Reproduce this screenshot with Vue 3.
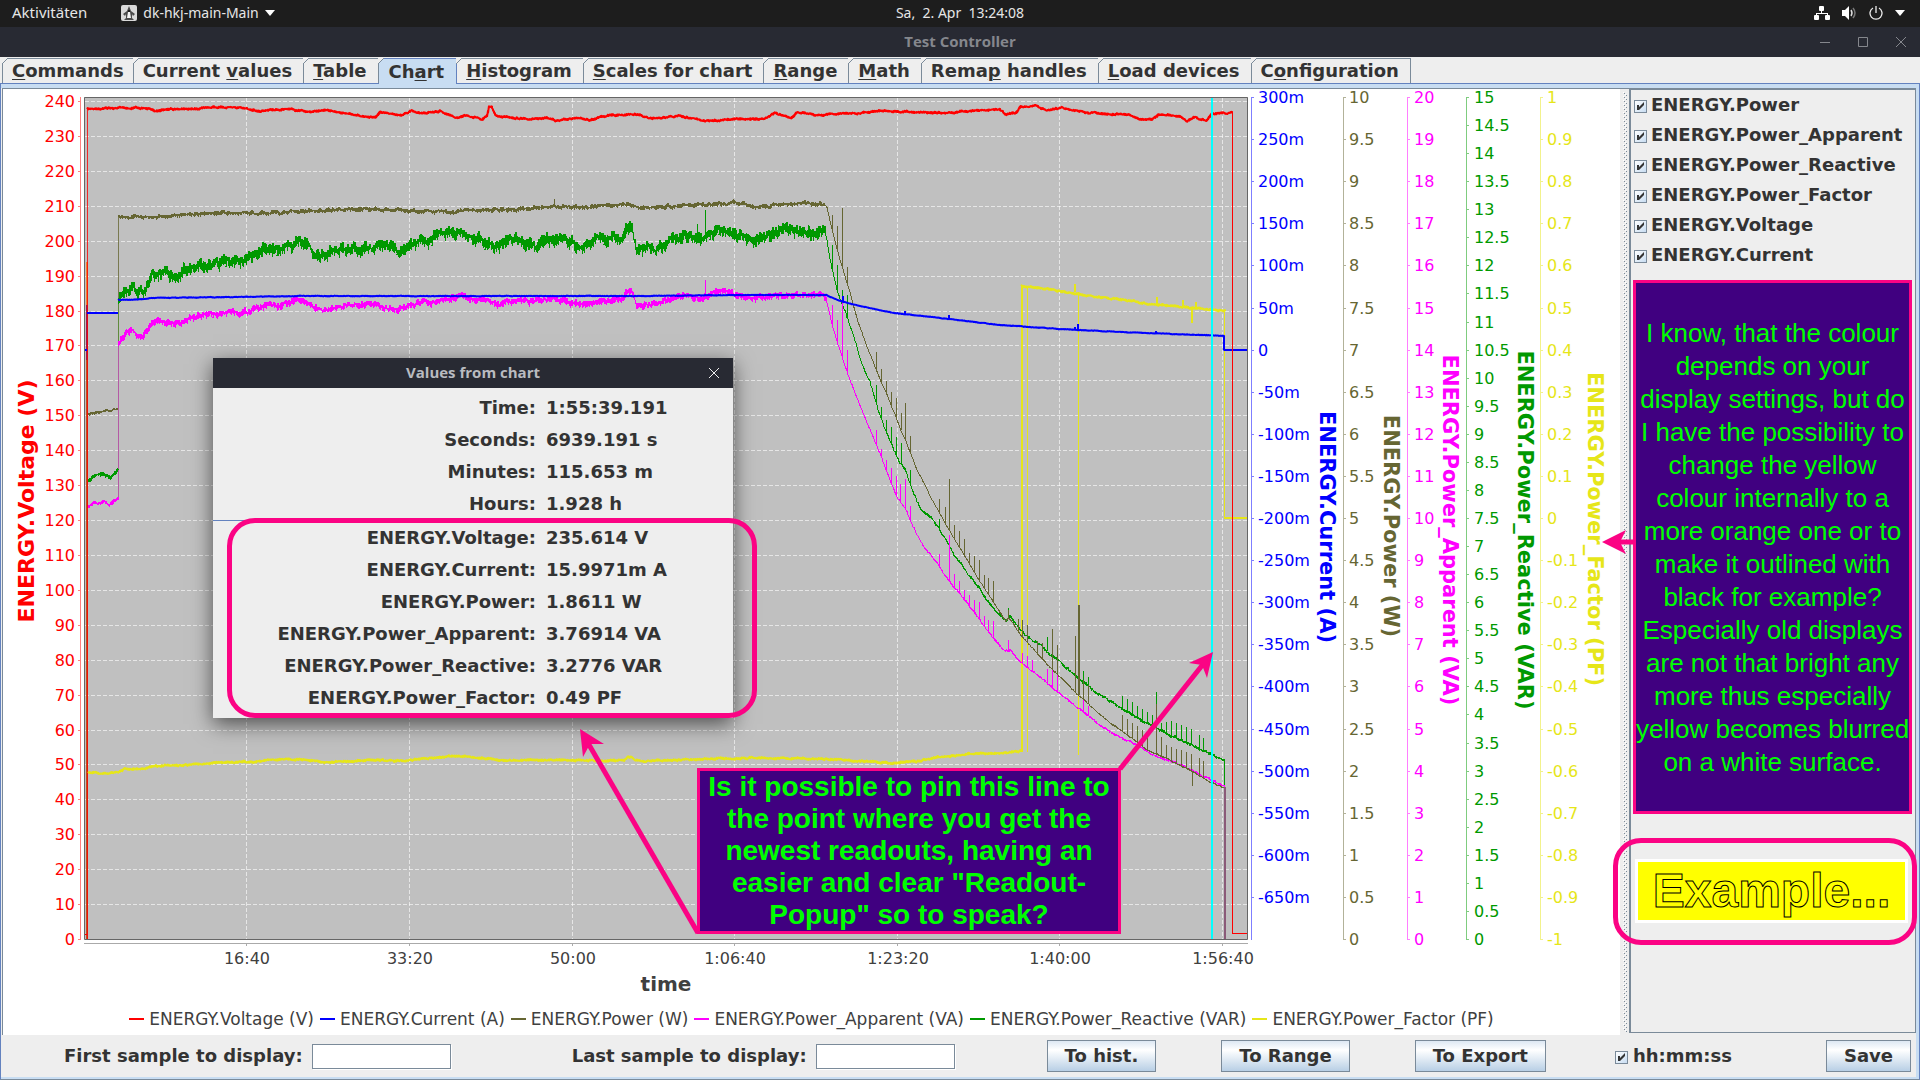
<script setup>
import { ref } from 'vue'

const tabs = [
  ['', 'C', 'ommands'],
  ['Current ', 'v', 'alues'],
  ['', 'T', 'able'],
  ['Ch', 'a', 'rt'],
  ['', 'H', 'istogram'],
  ['', 'S', 'cales for chart'],
  ['', 'R', 'ange'],
  ['', 'M', 'ath'],
  ['Rema', 'p', ' handles'],
  ['', 'L', 'oad devices'],
  ['C', 'o', 'nfiguration'],
]
const activeTab = ref(3)

const channels = ref([
  { name: 'ENERGY.Power', on: true },
  { name: 'ENERGY.Power_Apparent', on: true },
  { name: 'ENERGY.Power_Reactive', on: true },
  { name: 'ENERGY.Power_Factor', on: true },
  { name: 'ENERGY.Voltage', on: true },
  { name: 'ENERGY.Current', on: true },
])
const hhmmss = ref(true)
const firstSample = ref('')
const lastSample = ref('')

const timeRows = [
  ['Time:', '1:55:39.191'],
  ['Seconds:', '6939.191 s'],
  ['Minutes:', '115.653 m'],
  ['Hours:', '1.928 h'],
]
const valueRows = [
  ['ENERGY.Voltage:', '235.614 V'],
  ['ENERGY.Current:', '15.9971m A'],
  ['ENERGY.Power:', '1.8611 W'],
  ['ENERGY.Power_Apparent:', '3.76914 VA'],
  ['ENERGY.Power_Reactive:', '3.2776 VAR'],
  ['ENERGY.Power_Factor:', '0.49 PF'],
]

const RED = '#ff0000'
const BLUE = '#0000ff'
const OLIVE = '#666633'
const MAGENTA = '#ff00ff'
const GREEN = '#009900'
const YELLOW = '#e6e619'

const legend = [
  ['ENERGY.Voltage (V)', RED],
  ['ENERGY.Current (A)', BLUE],
  ['ENERGY.Power (W)', OLIVE],
  ['ENERGY.Power_Apparent (VA)', MAGENTA],
  ['ENERGY.Power_Reactive (VAR)', GREEN],
  ['ENERGY.Power_Factor (PF)', YELLOW],
]

const TOP = 97
const BOTTOM = 939
const SPAN = BOTTOM - TOP

const voltTicks = Array.from({ length: 25 }, (_, i) => ({
  text: String(i * 10),
  y: Math.round(BOTTOM - (i * (BOTTOM - 101)) / 24),
}))

const timeTicks = ['16:40', '33:20', '50:00', '1:06:40', '1:23:20', '1:40:00', '1:56:40'].map(
  (text, i) => ({ text, x: Math.round(246.4 + i * 162.6) })
)

function ticks(count, intervals, format) {
  return Array.from({ length: count }, (_, i) => ({
    text: format(i),
    y: Math.round(TOP + (i * SPAN) / intervals),
  }))
}
const milli = (i) => {
  const v = 300 - i * 50
  return v === 0 ? '0' : v + 'm'
}
const axes = [
  { x: 1252, label: 1258, titleX: 1320, titleY: 527, title: 'ENERGY.Current (A)', color: BLUE, ticks: ticks(20, 20, milli) },
  { x: 1344, label: 1349, titleX: 1384, titleY: 526, title: 'ENERGY.Power (W)', color: OLIVE, ticks: ticks(21, 20, (i) => String(10 - i / 2)) },
  { x: 1408, label: 1414, titleX: 1443, titleY: 530, title: 'ENERGY.Power_Apparent (VA)', color: MAGENTA, ticks: ticks(21, 20, (i) => String(20 - i)) },
  { x: 1467, label: 1474, titleX: 1518, titleY: 530, title: 'ENERGY.Power_Reactive (VAR)', color: GREEN, ticks: ticks(31, 30, (i) => String(15 - i / 2)) },
  { x: 1541, label: 1547, titleX: 1588, titleY: 529, title: 'ENERGY.Power_Factor (PF)', color: YELLOW, ticks: ticks(21, 20, (i) => String((10 - i) / 10)) },
]

function random(seed) {
  let s = seed
  return () => {
    s = (s * 1664525 + 1013904223) % 4294967296
    return s / 4294967296 - 0.5
  }
}

/* points: [x, y, noise?] – noise stays in force until changed */
function trace(points, noise, seed) {
  const rnd = random(seed)
  let amp = noise
  let drift = 0
  let d = `M${points[0][0]} ${points[0][1]}`
  for (let i = 1; i < points.length; i++) {
    const [x0, y0, a] = points[i - 1]
    const [x1, y1] = points[i]
    if (a !== undefined) amp = a
    for (let x = x0 + 1; x <= x1; x += 1) {
      const t = (x - x0) / (x1 - x0)
      drift = drift * 0.6 + rnd() * amp * 0.4
      const y = y0 + (y1 - y0) * t + drift
      const half = (0.2 + Math.abs(rnd())) * amp * 0.6
      d += `L${x} ${(y - half).toFixed(1)}V${(y + half).toFixed(1)}`
    }
  }
  return d
}
function valueAt(points, x) {
  for (let i = 1; i < points.length; i++) {
    if (x <= points[i][0]) {
      const [x0, y0] = points[i - 1]
      const [x1, y1] = points[i]
      return y0 + ((y1 - y0) * (x - x0)) / (x1 - x0)
    }
  }
  return points[points.length - 1][1]
}
const spikes = (points, list) => list.map(([x, y]) => `M${x} ${valueAt(points, x).toFixed(1)}V${y}`).join('')

const red = [[87, 109], [110, 108], [150, 108], [156, 111], [170, 109], [195, 109], [220, 107], [245, 108], [256, 111], [285, 109], [310, 112], [328, 110], [345, 113], [364, 117], [376, 117], [380, 112], [400, 115], [412, 111], [425, 113], [440, 111], [457, 118], [465, 115], [482, 119], [487, 116], [489, 107], [492, 108], [496, 116], [515, 118], [530, 119], [545, 118], [558, 121], [575, 118], [590, 120], [610, 115], [640, 115], [650, 119], [680, 116], [705, 121], [740, 119], [765, 119], [775, 113], [791, 118], [798, 112], [815, 115], [860, 113], [880, 111], [940, 113], [1000, 109], [1005, 114], [1015, 113], [1020, 107], [1038, 106], [1046, 110], [1062, 108], [1090, 113], [1130, 115], [1140, 119], [1152, 119], [1158, 115], [1180, 116], [1187, 121], [1195, 117], [1206, 121], [1212, 114], [1224, 113], [1232, 113]]

const oliveA = [[88, 415], [95, 413], [105, 411], [118, 409]]
const olive = [[118, 217], [150, 217], [190, 215], [210, 213], [270, 213], [310, 211], [360, 209], [420, 211], [450, 212], [490, 210], [510, 210], [550, 207], [590, 207], [625, 204], [640, 208], [700, 205], [735, 203], [760, 207], [800, 203], [825, 205], [827, 208, 2], [832, 230], [840, 260], [850, 293], [858, 322], [867, 347], [877, 372], [887, 395], [900, 428], [908, 447], [917, 470], [932, 500], [947, 527], [967, 560], [980, 582], [992, 600], [1005, 621], [1009, 618], [1020, 634], [1040, 657], [1058, 675], [1078, 695], [1100, 715], [1120, 730], [1147, 750], [1170, 760], [1193, 772], [1210, 782], [1224, 788]]

const greenA = [[88, 482], [96, 475], [104, 474], [110, 478], [118, 470]]
const green = [[118, 304], [122, 296], [131, 287], [138, 292], [145, 291], [152, 276], [162, 272], [178, 278], [186, 270], [200, 265], [210, 268], [225, 261], [245, 260], [265, 248], [280, 250], [300, 240], [310, 250], [325, 257], [340, 248], [370, 250], [385, 246], [400, 252], [415, 243], [430, 240], [445, 233], [460, 231], [475, 240], [495, 246], [515, 241], [535, 245], [553, 238], [580, 245], [600, 240], [622, 240], [626, 227], [632, 228], [636, 250], [645, 248], [655, 250], [670, 243], [685, 235], [700, 240], [720, 230], [735, 234], [755, 240], [780, 231], [800, 234], [825, 232, 4], [832, 270], [838, 295], [845, 312], [853, 335], [861, 362], [870, 383], [878, 410], [885, 430], [893, 448], [899, 463], [905, 470], [912, 490], [920, 508], [932, 518], [944, 538], [955, 556], [967, 573], [980, 590], [990, 605], [1005, 621], [1010, 617], [1025, 635], [1040, 645], [1057, 660], [1078, 678], [1095, 692], [1120, 707], [1140, 720], [1165, 733], [1195, 747], [1212, 755], [1224, 761]]

const magentaA = [[88, 508], [94, 503], [100, 504], [104, 501], [109, 505], [118, 498]]
const magenta = [[118, 346], [122, 338], [131, 330], [136, 336], [143, 336], [152, 324], [165, 321], [178, 324], [195, 317], [225, 314], [245, 313], [265, 305], [280, 306], [298, 301], [310, 306], [325, 311], [345, 305], [370, 305], [400, 309], [425, 302], [445, 299], [460, 296], [475, 300], [500, 304], [520, 302], [553, 299], [580, 304], [622, 300], [628, 290], [632, 292], [636, 306], [660, 303], [685, 296], [700, 299], [720, 291], [740, 296], [755, 299], [780, 294], [820, 296], [826, 299, 3], [832, 325], [841, 355], [848, 375], [858, 402], [870, 430], [880, 455], [890, 480], [897, 498], [905, 508], [912, 525], [922, 545], [935, 560], [948, 580], [963, 598], [978, 618], [990, 635], [1005, 652], [1010, 650], [1020, 662], [1040, 677], [1058, 693], [1078, 708], [1095, 722], [1115, 735], [1140, 746], [1150, 754], [1175, 763], [1193, 771], [1210, 780], [1224, 786]]

const yellowA = [[88, 773], [118, 773], [125, 769], [145, 769], [155, 766], [185, 765], [215, 763], [245, 762], [270, 760], [300, 759], [325, 762], [370, 760], [400, 761], [420, 759], [460, 756], [500, 760], [560, 760], [600, 761], [624, 760], [628, 757], [632, 757], [635, 761], [680, 760], [700, 759], [760, 758], [830, 759], [860, 761], [890, 763], [920, 761], [940, 757], [970, 754], [1000, 753], [1021, 751]]
const yellowB = [[1021, 286], [1040, 288], [1060, 291], [1078, 294], [1120, 300], [1170, 306], [1190, 308], [1225, 311]]

const blue = [[118, 300], [145, 299], [150, 298], [240, 297], [300, 296], [450, 296], [640, 296], [740, 295], [826, 295], [840, 301], [860, 306], [895, 313], [950, 319], [1000, 325], [1060, 329], [1120, 332], [1200, 335], [1224, 336]]

const comb = (from, to, top0, top1) => {
  const list = []
  for (let x = from; x <= to; x += 5) list.push([x, top0 + ((top1 - top0) * (x - from)) / (to - from)])
  return list
}

const traces = [
  { color: YELLOW, d: trace(yellowA, 3, 5) + trace(yellowB, 3, 6), w: 2 },
  { color: YELLOW, d: 'M1022 285V752M1192 308V323M1075 292V284M1157 304V297M1183 307V300M1196 308V302', w: 2 },
  { color: YELLOW, d: 'M1027.5 287V752M1078.5 292V755M1224.5 311V518', w: 1 },
  { color: YELLOW, d: 'M1224 518H1248', w: 2 },
  { color: GREEN, d: trace(greenA, 5, 11) + trace(green, 14, 12), w: 1 },
  { color: GREEN, d: spikes(green, [[697, 224], [705, 210], [832, 245], [837, 265], [842, 290], [847, 295], [876, 385], [881, 407], [886, 420], [891, 427], [896, 437], [901, 443], [910, 470], [939, 519], [1008, 608], [1047, 637], [1057, 645], [1075, 636], [1078, 607], [1083, 671], [1088, 677], ...comb(1122, 1152, 696, 715), [1156, 692], [1161, 723], [1166, 722], ...comb(1171, 1191, 721, 729), [1199, 735], [1203, 738]]) + 'M1224 761V787', w: 1 },
  { color: MAGENTA, d: trace(magentaA, 4, 21) + trace(magenta, 8, 22), w: 1 },
  { color: MAGENTA, d: spikes(magenta, [[705, 280], [832, 305], [837, 320], [842, 297], [847, 350], [876, 430], [881, 449], [886, 460], [891, 468], [896, 476], [900, 484], [905, 479], [910, 506], [939, 554], [949, 535], [954, 574], [959, 581], [964, 590], [969, 595], [974, 600], [979, 602], [984, 616], [988, 620], [993, 621], [1008, 640], [1022, 653], [1027, 656], [1032, 660], [1047, 669], [1052, 658], [1057, 675], [1083, 699], [1088, 706]]), w: 1 },
  { color: OLIVE, d: trace(oliveA, 3, 31) + trace(olive, 5, 32), w: 1 },
  { color: OLIVE, d: spikes(olive, [[554, 199], [832, 215], [837, 226], [842, 208], [847, 267], [876, 352], [881, 369], [886, 381], [891, 392], [896, 398], [901, 413], [905, 403], [910, 436], [939, 499], [945, 507], [949, 479], [954, 525], [959, 531], [964, 539], [969, 553], [974, 556], [979, 560], [984, 575], [988, 578], [993, 581], [1008, 610], [1018, 619], [1022, 620], [1027, 625], [1037, 641], [1042, 643], [1052, 629], [1057, 645], [1075, 636], [1078, 605], [1083, 680], [1088, 685], ...comb(1122, 1147, 715, 734), [1156, 704], [1161, 737], ...comb(1166, 1191, 745, 754), [1199, 758], [1203, 761], [1192, 786]]) + 'M1079 695V605', w: 1 },
  { color: '#8a5a78', d: 'M1225 787V939', w: 2 },
  { color: BLUE, d: 'M84 350H87M87 313H118' + trace(blue, 1, 41) + 'M1224 336V350H1248M843 301V296M905 315V311M949 319V315M1075 330V327M1078 330V324M1156 333V331', w: 2 },
  { color: RED, d: trace(red, 3, 51), w: 2 },
  { color: RED, d: 'M1232 113V933M1232 933H1248M84 934H87', w: 1 },
]
</script>

<template>
  <div class="desktop">
    <header class="topbar">
      <div class="topbar-left">
        <span>Aktivitäten</span>
        <span class="app-menu">
          <svg width="16" height="16" viewBox="0 0 16 16">
            <rect width="16" height="16" rx="2" fill="#d9d9d9" />
            <path d="M8 1 10 6 14 9 12 11 11 9 11 13 13 15H3L5 13V9L4 11 2 9 6 6Z" fill="#4a4a4a" />
            <path d="M7 7H9L10 13H6Z" fill="#f4f4f4" />
            <circle cx="8" cy="6" r="1" fill="#111" />
          </svg>
          dk-hkj-main-Main
          <svg width="10" height="6" viewBox="0 0 10 6"><path d="M0 0H10L5 6Z" fill="#fff" /></svg>
        </span>
      </div>
      <div class="clock">Sa,&nbsp; 2. Apr&nbsp; 13:24:08</div>
      <div class="tray">
        <svg width="16" height="14" viewBox="0 0 16 14" fill="#fff">
          <rect x="5" width="5" height="5" rx="1" /><rect y="9" width="5" height="5" rx="1" /><rect x="11" y="9" width="5" height="5" rx="1" />
          <path d="M7 4H8V7H14V10H13V8H3V10H2V7H7Z" />
        </svg>
        <svg width="15" height="14" viewBox="0 0 15 14">
          <path d="M0 4H3L7 0V14L3 10H0Z" fill="#fff" />
          <path d="M9 4Q11 7 9 10" fill="none" stroke="#ddd" stroke-width="1.5" />
          <path d="M11 2Q15 7 11 12" fill="none" stroke="#777" stroke-width="1.5" />
        </svg>
        <svg width="14" height="14" viewBox="0 0 14 14" fill="none" stroke="#eee" stroke-width="1.3">
          <path d="M4 2A6 6 0 1 0 10 2M7 0V7" />
        </svg>
        <svg width="10" height="6" viewBox="0 0 10 6"><path d="M0 0H10L5 6Z" fill="#fff" /></svg>
      </div>
    </header>

    <div class="titlebar">
      <span></span>
      <h1>Test Controller</h1>
      <div class="window-buttons">
        <button type="button" aria-label="Minimize"><svg width="12" height="12" viewBox="0 0 12 12"><path d="M1 6.5H11" /></svg></button>
        <button type="button" aria-label="Maximize"><svg width="12" height="12" viewBox="0 0 12 12"><path d="M1.500 1.500H10.500V10.500H1.500Z" /></svg></button>
        <button type="button" aria-label="Close"><svg width="12" height="12" viewBox="0 0 12 12"><path d="M1 1 11 11M11 1 1 11" /></svg></button>
      </div>
    </div>

    <nav class="tabs">
      <button v-for="(t, i) in tabs" :key="i" type="button" class="tab" :class="{ active: i === activeTab }" @click="activeTab = i">{{ t[0] }}<u>{{ t[1] }}</u>{{ t[2] }}</button>
    </nav>

    <main class="pane">
      <div class="split">
        <section class="chart">
          <svg class="plot" viewBox="3 89 1617 913">
            <rect x="84" y="97" width="1164" height="842" fill="#c0c0c0" />
            <g stroke="#fff" stroke-opacity="0.6" stroke-dasharray="4 2" shape-rendering="crispEdges">
              <path v-for="t in voltTicks" :key="'h' + t.y" :d="`M85 ${t.y + 0.5}H1247`" />
              <path v-for="t in timeTicks" :key="'v' + t.x" :d="`M${t.x + 0.5} 98V939`" />
            </g>

            <g fill="none" stroke-width="1" shape-rendering="crispEdges">
              <path d="M118.500 217V409" :stroke="OLIVE" stroke-opacity="0.8" />
              <path d="M118.500 302V470" stroke="#5f8a3c" />
              <path d="M118.500 346V498" stroke="#b45aa5" />
              <path d="M87 262V305" stroke="#f08030" stroke-width="2" />
              <path d="M87 305V360" stroke="#a01850" stroke-width="2" />
              <path d="M87 360V939" stroke="#c05020" stroke-width="2" />
              <path d="M87.500 109V939" :stroke="RED" stroke-opacity="0.8" />
            </g>
            <g fill="none" stroke-linejoin="bevel">
              <path
                v-for="(t, i) in traces"
                :key="i"
                :d="t.d"
                :stroke="t.color"
                :stroke-width="t.w"
                :shape-rendering="t.w === 1 ? 'crispEdges' : 'auto'"
              />
            </g>
            <path d="M1212 98V939" stroke="#00ffff" stroke-width="2" />
            <path d="M84.500 97.500H1247.500V939.500H84.500Z" fill="none" stroke="#666" stroke-width="1" />

            <g fill="none" :stroke="RED" stroke-opacity="0.5">
              <path d="M80.500 97V940" />
              <path v-for="t in voltTicks" :key="t.y" :d="`M78 ${t.y + 0.5}H80`" />
            </g>
            <g :fill="RED" text-anchor="end" class="tick">
              <text v-for="t in voltTicks" :key="t.y" x="75" :y="t.y + 6">{{ t.text }}</text>
            </g>
            <text class="axis-title large" :fill="RED" transform="translate(34 501) rotate(-90)">ENERGY.Voltage (V)</text>

            <g fill="none" stroke="#aaa">
              <path d="M84 943.500H1248" />
              <path v-for="t in timeTicks" :key="t.x" :d="`M${t.x + 0.5} 944V946`" />
            </g>
            <g fill="#404040" text-anchor="middle" class="tick">
              <text v-for="t in timeTicks" :key="t.x" :x="t.x + 1" y="964">{{ t.text }}</text>
            </g>
            <text class="axis-title time" fill="#404040" x="666" y="991">time</text>

            <g v-for="a in axes" :key="a.title">
              <g fill="none" :stroke="a.color" stroke-opacity="0.5">
                <path :d="`M${a.x - 0.5} 97V940`" />
                <path v-for="t in a.ticks" :key="t.y" :d="`M${a.x} ${t.y + 0.5}H${a.x + 2}`" />
              </g>
              <g :fill="a.color" class="tick">
                <text v-for="t in a.ticks" :key="t.y" :x="a.label" :y="t.y + 6">{{ t.text }}</text>
              </g>
              <text class="axis-title" :fill="a.color" :transform="`translate(${a.titleX} ${a.titleY}) rotate(90)`">{{ a.title }}</text>
            </g>
          </svg>
          <ul class="legend">
            <li v-for="l in legend" :key="l[0]"><i :style="{ background: l[1] }"></i>{{ l[0] }}</li>
          </ul>
        </section>

        <svg class="divider" aria-hidden="true">
          <defs>
            <pattern id="bumps" width="4" height="4" patternUnits="userSpaceOnUse">
              <rect width="1" height="1" fill="#7a8a99" /><rect x="2" y="2" width="1" height="1" fill="#7a8a99" />
              <rect x="1" y="1" width="1" height="1" fill="#fff" /><rect x="3" y="3" width="1" height="1" fill="#fff" />
            </pattern>
          </defs>
          <rect x="3" y="3" width="4" height="940" fill="url(#bumps)" />
        </svg>

        <aside class="channels">
          <label v-for="c in channels" :key="c.name"><input v-model="c.on" type="checkbox" />{{ c.name }}</label>
        </aside>
      </div>

      <footer class="controls">
        <label class="field first">First sample to display:<input v-model="firstSample" type="text" /></label>
        <label class="field last">Last sample to display:<input v-model="lastSample" type="text" /></label>
        <button type="button" class="hist">To hist.</button>
        <button type="button">To Range</button>
        <button type="button">To Export</button>
        <label class="format"><input v-model="hhmmss" type="checkbox" />hh:mm:ss</label>
        <button type="button" class="save">Save</button>
      </footer>
    </main>

    <section class="popup" role="dialog" aria-label="Values from chart">
      <div class="popup-title">
        <span></span>
        <h2>Values from chart</h2>
        <button type="button" aria-label="Close"><svg width="12" height="12" viewBox="0 0 12 12"><path d="M1 1 11 11M11 1 1 11" /></svg></button>
      </div>
      <table>
        <tbody>
          <tr v-for="r in timeRows" :key="r[0]"><th scope="row">{{ r[0] }}</th><td>{{ r[1] }}</td></tr>
        </tbody>
      </table>
      <hr />
      <table>
        <tbody>
          <tr v-for="r in valueRows" :key="r[0]"><th scope="row">{{ r[0] }}</th><td>{{ r[1] }}</td></tr>
        </tbody>
      </table>
    </section>

    <div class="ring ring-values"></div>
    <div class="ring ring-example"></div>
    <svg class="arrows" width="1920" height="1080" viewBox="0 0 1920 1080" aria-hidden="true">
      <g stroke="#fb0384" stroke-width="5" fill="none">
        <path d="M698 933 588 743" />
        <path d="M1120 769 1204 663" />
        <path d="M1634 542H1615" />
      </g>
      <g fill="#fb0384">
        <path d="M580 729 604 744 590 744 583 757Z" />
        <path d="M1213 652 1189 663 1202 665 1207 678Z" />
        <path d="M1602 542 1626 530 1620 542 1626 554Z" />
      </g>
    </svg>
    <p class="note note-pin">Is it possible to pin this line to<br />the point where you get the<br />newest readouts, having an<br />easier and clear "Readout-<br />Popup" so to speak?</p>
    <p class="note note-colour">I know, that the colour<br />depends on your<br />display settings, but do<br />I have the possibility to<br />change the yellow<br />colour internally to a<br />more orange one or to<br />make it outlined with<br />black for example?<br />Especially old displays<br />are not that bright any<br />more thus especially<br />yellow becomes blurred<br />on a white surface.</p>
    <p class="example">Example...</p>
  </div>
</template>

<style>
body {
  margin: 0;
  background: #eee;
}
</style>

<style scoped>
.desktop {
  position: relative;
  min-height: 100vh;
  box-sizing: border-box;
  display: flex;
  flex-direction: column;
  overflow: hidden;
  background: #eee;
  color: #333;
  font: bold 18px/24px "DejaVu Sans", sans-serif;
}
button {
  font: inherit;
  color: inherit;
  padding: 0;
}
.topbar,
.titlebar {
  display: grid;
  grid-template-columns: 1fr auto 1fr;
  align-items: center;
}
.topbar {
  height: 27px;
  background: #1d1d1d;
  color: #e6e6e6;
  font: 15px/25px "Noto Sans", sans-serif;
}
.topbar > * {
  padding-bottom: 2px;
}
.topbar-left {
  display: flex;
  gap: 34px;
  padding-left: 12px;
}
.app-menu {
  display: flex;
  align-items: center;
  gap: 6px;
  font-size: 14px;
}
.clock {
  font-size: 14px;
}
.tray {
  display: flex;
  align-items: center;
  justify-content: flex-end;
  gap: 12px;
  padding-right: 15px;
}
.titlebar {
  height: 30px;
  background: #282a33;
}
.titlebar h1,
.popup h2 {
  margin: 0;
  padding-bottom: 2px;
  font: bold 15px/28px "Open Sans", sans-serif;
  color: #85878d;
}
.window-buttons {
  display: flex;
  justify-content: flex-end;
  gap: 26px;
  padding-right: 13px;
}
.window-buttons button,
.popup-title button {
  display: flex;
  border: 0;
  background: none;
}
.window-buttons svg {
  fill: none;
  stroke: #85878d;
}
.tabs {
  display: flex;
  align-items: flex-end;
  height: 26px;
  padding-left: 2px;
  border-bottom: 1px solid #6382bf;
}
.tab {
  position: relative;
  height: 25px;
  padding: 0 11px 0 9px;
  border: 1px solid #7a8a99;
  border-width: 1px 1px 0 0;
  background: #eee;
  line-height: 22px;
  white-space: pre;
}
.tab:first-child {
  border-left-width: 1px;
  padding-right: 9px;
}
.tab::before {
  content: "";
  position: absolute;
  left: -1px;
  top: -1px;
  width: 6px;
  height: 6px;
  background: linear-gradient(135deg, #eee 44%, #7a8a99 45%, #7a8a99 56%, transparent 57%);
}
.tab.active {
  background: #c8ddf2;
  border-color: #6382bf;
  margin-bottom: -1px;
  height: 26px;
  padding: 0 12px 0 10px;
}
.tab u {
  text-decoration-thickness: 1px;
  text-underline-offset: 2px;
}
.pane {
  flex: 1;
  display: flex;
  flex-direction: column;
  border: 1px solid #6382bf;
  border-top: 0;
  border-bottom-color: #7a8a99;
  box-shadow: inset 0 -2px #c8ddf2, inset -3px 0 #c8ddf2, inset 0 4px #c8ddf2;
  padding: 4px 3px 2px 1px;
}
.split {
  display: flex;
  border-top: 1px solid #7a8a99;
  border-left: 1px solid #7a8a99;
}
.chart {
  flex: 1;
  min-width: 0;
  background: #fff;
}
.plot {
  display: block;
  width: 100%;
}
.tick {
  font: 16px "DejaVu Sans", sans-serif;
}
.axis-title {
  font: bold 21px "DejaVu Sans", sans-serif;
  text-anchor: middle;
}
.axis-title.large {
  font-size: 22px;
}
.axis-title.time {
  font-size: 20px;
}
.legend {
  display: flex;
  justify-content: center;
  gap: 6px;
  height: 33px;
  margin: 0;
  padding: 0;
  list-style: none;
  font: 17px/34px "DejaVu Sans", sans-serif;
  color: #404040;
  white-space: nowrap;
}
.legend li {
  display: flex;
  align-items: center;
  gap: 5px;
}
.legend i {
  width: 15px;
  height: 2px;
}
.divider {
  width: 9px;
  height: auto;
  flex: none;
}
.channels {
  width: 287px;
  box-sizing: border-box;
  border: 1px solid #7a8a99;
  border-width: 1px 1px 1px 2px;
  margin-bottom: 2px;
}
.channels label {
  display: flex;
  align-items: center;
  gap: 4px;
  height: 30px;
  padding-left: 3px;
}
input[type="checkbox"] {
  appearance: none;
  width: 13px;
  height: 13px;
  margin: 2px 0 0;
  border: 1px solid #7a8a99;
  background: linear-gradient(#fff, #c8ddf2);
}
input[type="checkbox"]:checked {
  background: url("data:image/svg+xml,%3Csvg xmlns='http://www.w3.org/2000/svg' viewBox='0 0 11 11'%3E%3Cpath d='M2 4H4V6L9 1V4L4 9H2Z' fill='%23333'/%3E%3C/svg%3E"), linear-gradient(135deg, #fff, #c8ddf2);
}
.controls {
  flex: 1;
  display: flex;
  align-items: center;
  padding: 0 5px 0 62px;
  white-space: nowrap;
}
.field {
  display: flex;
  align-items: center;
  gap: 9px;
}
.field input {
  width: 139px;
  height: 25px;
  box-sizing: border-box;
  border: 1px solid #7a8a99;
  box-shadow: 1px 1px #fff;
  background: #fff;
  font: inherit;
}
.last {
  margin-left: 121px;
}
.controls button {
  height: 32px;
  padding: 0 17px;
  margin-left: 65px;
  border: 1px solid #7a8a99;
  background: linear-gradient(#dde8f3, #fff 30%, #b8cfe5);
  line-height: 28px;
}
.controls .hist {
  margin-left: 92px;
}
.format {
  display: flex;
  align-items: center;
  gap: 5px;
  margin-left: 69px;
}
.controls .save {
  margin-left: auto;
}
.popup {
  position: absolute;
  left: 213px;
  top: 358px;
  width: 520px;
  height: 360px;
  background: #eee;
  box-shadow: 0 6px 20px rgba(0, 0, 0, 0.6);
}
.popup-title {
  display: grid;
  grid-template-columns: 1fr auto 1fr;
  align-items: center;
  height: 30px;
  margin-bottom: 4px;
  background: #282a33;
}
.popup h2 {
  color: #b9bbc0;
}
.popup-title button {
  justify-self: end;
  margin-right: 13px;
}
.popup-title svg {
  fill: none;
  stroke: #eee;
}
.popup table {
  width: 100%;
  table-layout: fixed;
  border-collapse: collapse;
}
.popup th,
.popup td {
  height: 32px;
  padding: 0;
  line-height: 32px;
  text-align: left;
}
.popup th {
  width: 323px;
  text-align: right;
}
.popup td {
  padding-left: 10px;
}
.popup hr {
  margin: 0 0 1px;
  border: 0;
  border-top: 1px solid #6382bf;
}
.ring {
  position: absolute;
  box-sizing: border-box;
  border: 5px solid #fb0384;
  border-radius: 28px;
}
.ring-values {
  left: 227px;
  top: 518px;
  width: 530px;
  height: 200px;
}
.ring-example {
  left: 1613px;
  top: 838px;
  width: 304px;
  height: 107px;
}
.arrows {
  position: absolute;
  left: 0;
  top: 0;
  pointer-events: none;
}
.note {
  position: absolute;
  box-sizing: border-box;
  margin: 0;
  border: 3px solid #fb0384;
  background: #400080;
  color: #0f0;
  text-align: center;
  white-space: nowrap;
}
.note-pin {
  left: 697px;
  top: 768px;
  width: 424px;
  height: 166px;
  font: bold 28px/32px "Liberation Sans", sans-serif;
}
.note-colour {
  left: 1633px;
  top: 280px;
  width: 279px;
  height: 534px;
  padding-top: 34px;
  font: 26px/33px "Liberation Sans", sans-serif;
}
.example {
  position: absolute;
  left: 1635px;
  top: 859px;
  box-sizing: border-box;
  width: 273px;
  height: 64px;
  margin: 0;
  border: 3px solid #fff;
  background: #ff0;
  color: #ff0;
  text-align: center;
  font: bold 48px/58px "Liberation Sans", sans-serif;
  -webkit-text-stroke: 1px #000;
}
</style>
